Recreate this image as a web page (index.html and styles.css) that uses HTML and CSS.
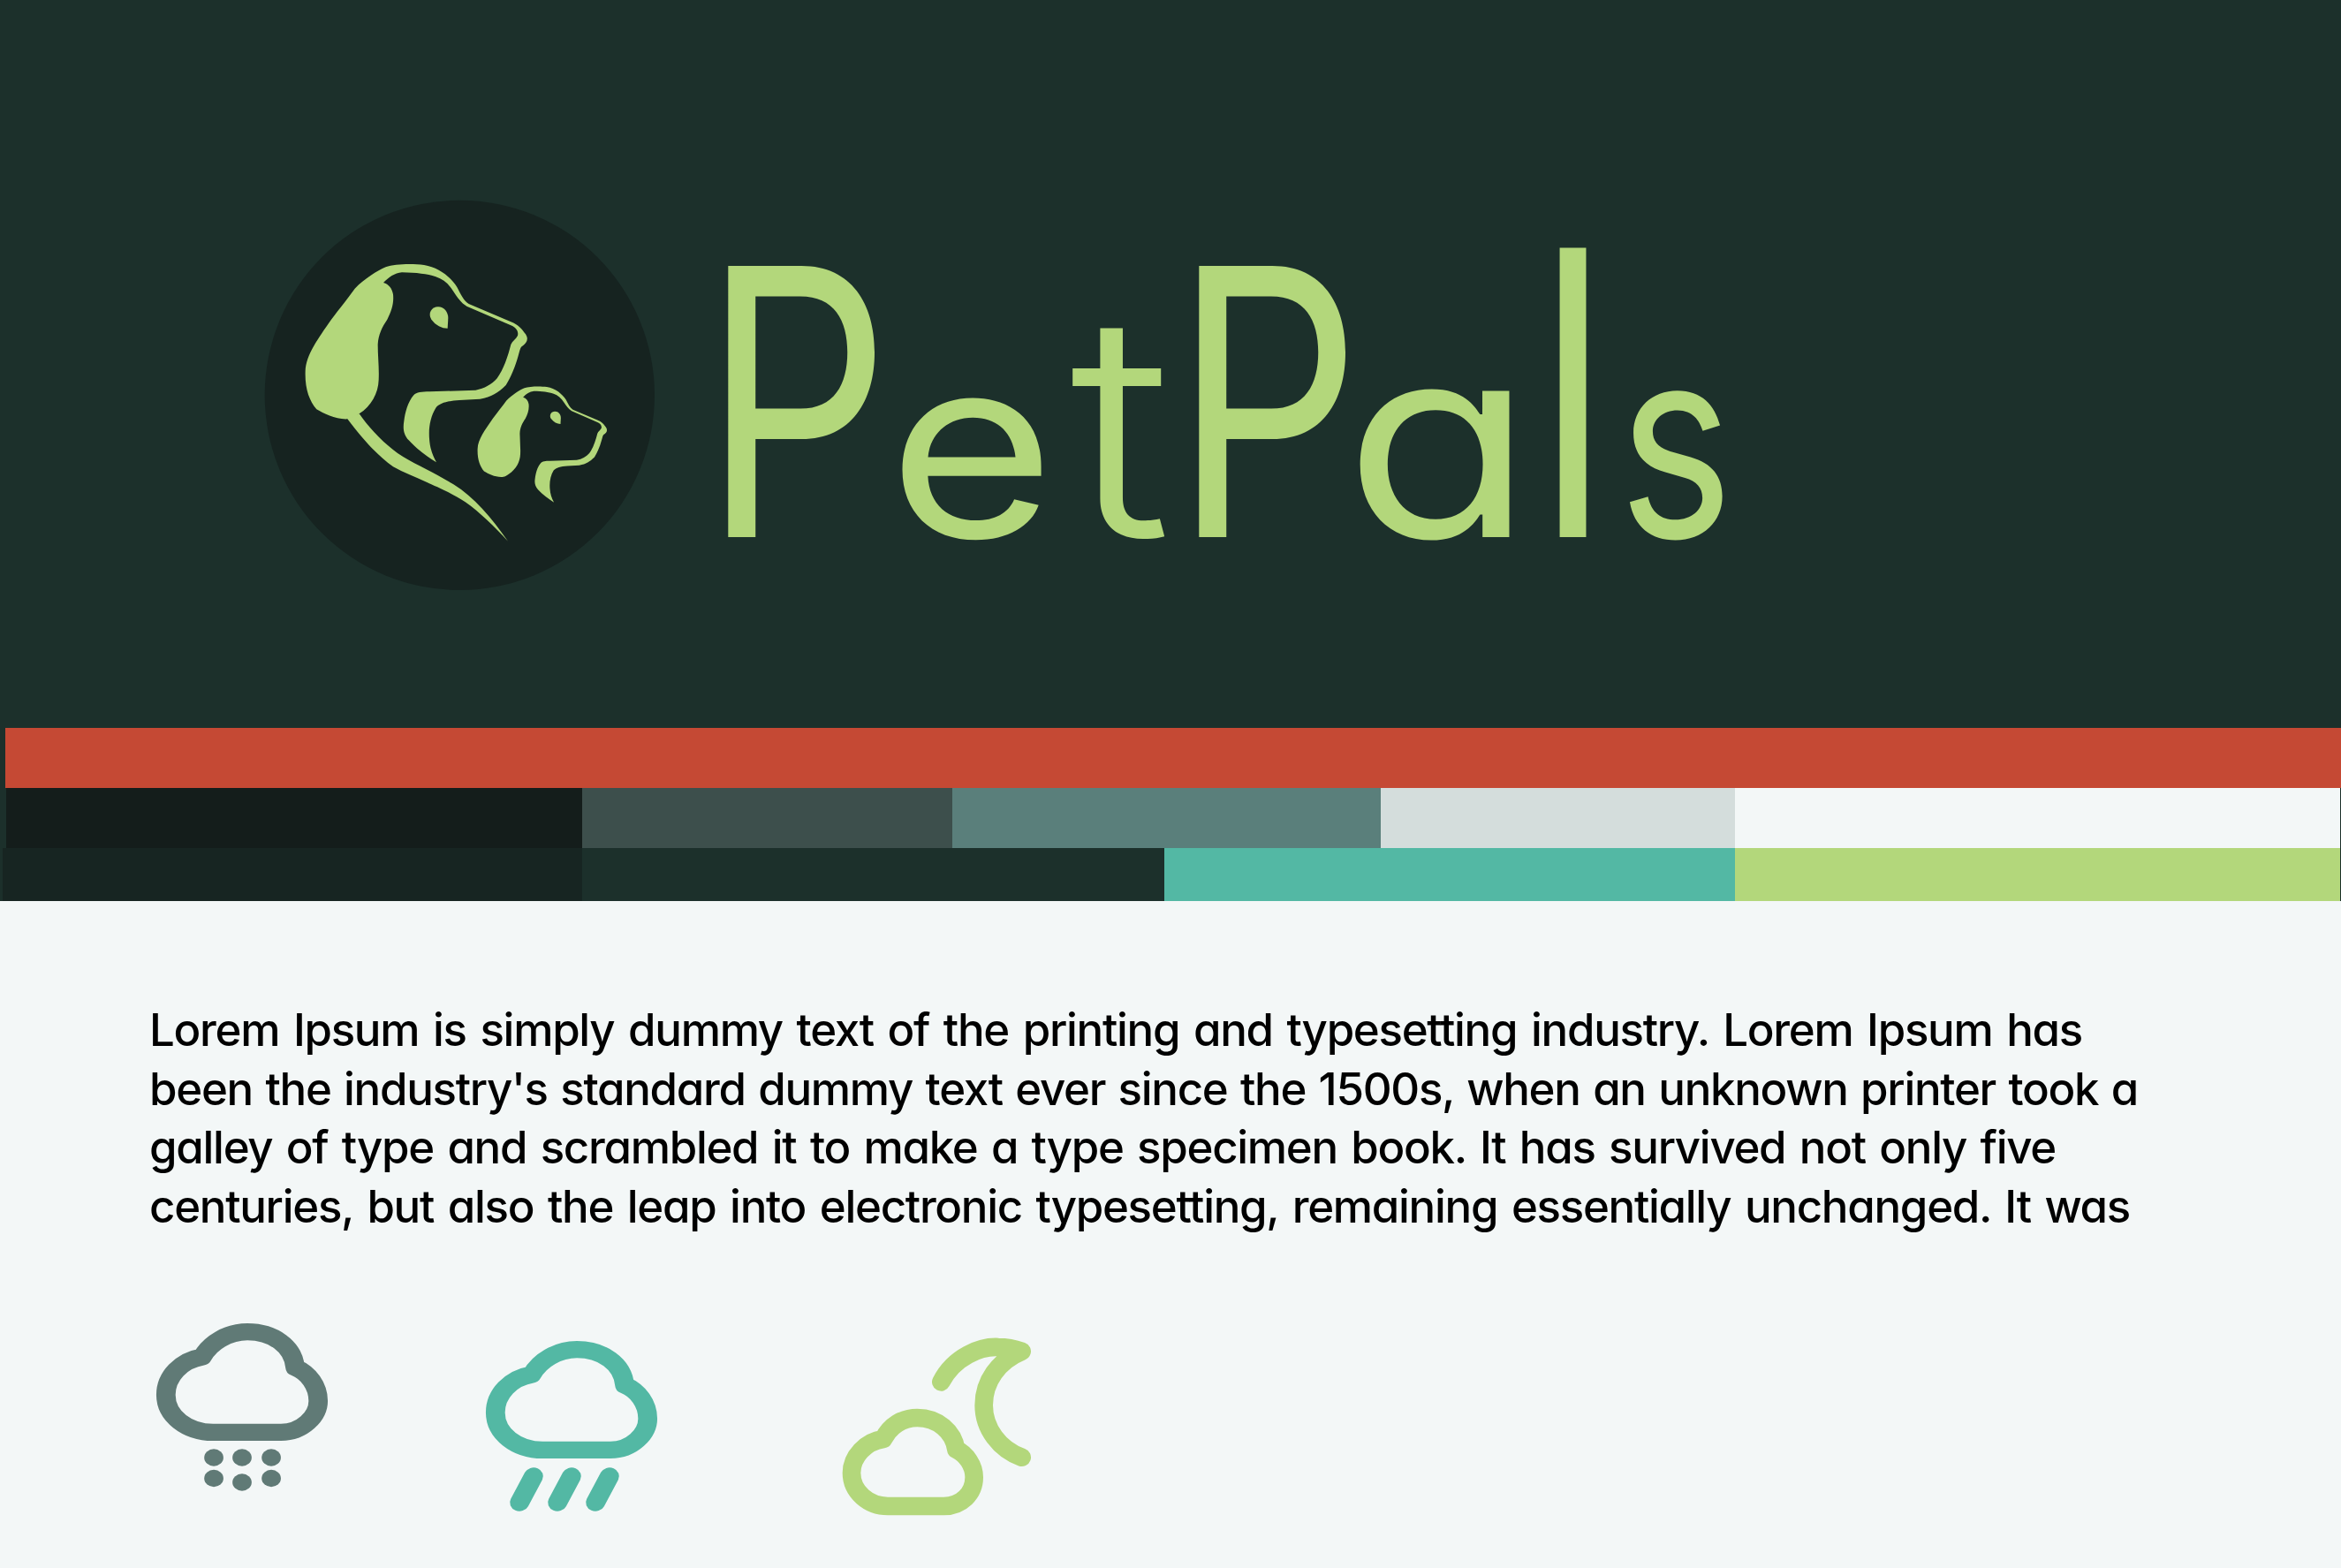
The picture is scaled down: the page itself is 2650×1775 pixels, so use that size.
FILE: index.html
```html
<!DOCTYPE html>
<html lang="en">
<head>
<meta charset="utf-8">
<title>PetPals</title>
<link rel="stylesheet" href="styles.css">
</head>
<body>
<div class="page">
  <header class="hero">
    <svg class="logo" viewBox="0 0 1440 1440" aria-label="PetPals logo">
      <defs>
        <g id="dog-head">
          <path d="M197 630C199 575 240 520 285 455C315 415 340 385 365 350C400 315 440 290 470 277C500 266 560 265 600 270C650 278 690 310 712 345C725 370 735 392 752 402L895 463C920 472 932 488 945 505C956 522 950 535 930 548C926 553 924 565 920 578C910 615 895 650 878 678C850 705 830 718 790 725L720 729C680 732 655 738 640 755C622 785 615 820 618 860C620 890 628 915 642 940C610 920 575 895 548 865C530 845 528 825 532 800C536 770 545 735 565 712C575 702 590 700 620 700L775 695C805 690 830 675 848 655C870 625 885 580 895 540C900 528 912 522 918 510C922 495 912 482 895 475L745 410C725 398 715 382 700 360C685 335 665 318 640 310C610 300 575 296 525 295C500 297 480 312 462 330C480 335 492 350 495 370C498 400 490 425 475 455C458 480 445 505 443 540C443 580 448 620 446 660C445 705 420 750 380 775C365 787 350 793 340 793C300 795 260 775 235 760C210 730 195 690 197 630Z"/>
          <path d="M648 412C668 412 682 430 682 450L680 485C660 485 640 475 625 455C612 435 625 412 648 412Z"/>
        </g>
      </defs>
      <circle class="logo-disc" cx="721" cy="712" r="662"/>
      <g class="logo-mark">
        <use href="#dog-head"/>
        <path d="M380 775C410 820 470 885 530 922C580 952 640 978 700 1015C770 1058 830 1130 885 1208C840 1160 790 1110 740 1075C690 1042 640 1022 610 1008C570 990 530 975 495 955C440 915 395 865 340 793Z"/>
        <use href="#dog-head" transform="translate(667 526) scale(.583 .585)"/>
      </g>
    </svg>
    <h1 class="brand">
      <span class="ch ch-p1">P</span><span class="ch ch-e">e</span><span class="ch ch-t">t</span><span class="ch ch-p2">P</span><span class="ch ch-a">a</span><span class="ch ch-l">l</span><span class="ch ch-s">s</span>
    </h1>
  </header>

  <section class="palette">
    <div class="row row-red"></div>
    <div class="row row-mid">
      <div class="sw sw-ink"></div>
      <div class="sw sw-slate"></div>
      <div class="sw sw-teal-grey"></div>
      <div class="sw sw-mist"></div>
      <div class="sw sw-snow"></div>
    </div>
    <div class="row row-low">
      <div class="sw sw-deep"></div>
      <div class="sw sw-forest"></div>
      <div class="sw sw-teal"></div>
      <div class="sw sw-lime"></div>
    </div>
  </section>

  <main class="content">
    <p class="copy">
      <span class="line line-1">Lorem Ipsum is simply dummy text of the printing and typesetting industry. Lorem Ipsum has</span>
      <span class="line line-2">been the industry's standard dummy text ever since the 1500s, when an unknown printer took a</span>
      <span class="line line-3">galley of type and scrambled it to make a type specimen book. It has survived not only five</span>
      <span class="line line-4">centuries, but also the leap into electronic typesetting, remaining essentially unchanged. It was</span>
    </p>
    <div class="icons">
      <svg class="icon icon-snow" viewBox="0 0 172.4 190" preserveAspectRatio="none" aria-label="Snow">
        <path class="cloud" d="M57 123.4H125.3C147 123.4 162.8 105 162.8 88C162.8 71 153 56 139.6 50C137.8 26 117.3 9.7 91.6 9.7C72 9.7 54.2 22 46.2 38C24.9 42 9.6 60 9.6 81C9.6 105 31 123.4 57 123.4Z"/>
        <g class="dots">
          <circle cx="57.8" cy="152" r="9.65"/><circle cx="86.2" cy="152" r="9.65"/><circle cx="115.6" cy="152" r="9.65"/>
          <circle cx="57.8" cy="175.5" r="9.65"/><circle cx="86.2" cy="180" r="9.65"/><circle cx="115.6" cy="175.5" r="9.65"/>
        </g>
      </svg>
      <svg class="icon icon-rain" viewBox="0 0 172.4 195" preserveAspectRatio="none" aria-label="Rain">
        <path class="cloud" d="M57 123.4H125.3C147 123.4 162.8 105 162.8 88C162.8 71 153 56 139.6 50C137.8 26 117.3 9.7 91.6 9.7C72 9.7 54.2 22 46.2 38C24.9 42 9.6 60 9.6 81C9.6 105 31 123.4 57 123.4Z"/>
        <path class="cloud" d="M48 153L33.8 183M86.2 153L72 183M124.4 153L110.2 183"/>
      </svg>
      <svg class="icon icon-moon" viewBox="0 0 810 720" aria-label="Cloudy night">
        <path class="cloud" d="M255 648H445C505 648 548 605 548 550C548 510 522 472 487 455C478 395 425 348 355 348C305 348 262 375 240 420C180 428 132 480 132 535C132 600 190 648 255 648Z"/>
        <path class="cloud" d="M436 226C480 140 570 105 630 108C660 108 690 115 710 122C630 155 581 225 581 305C581 385 635 455 710 482"/>
      </svg>
    </div>
  </main>
</div>
</body>
</html>
```

FILE: styles.css
```css
* { box-sizing: border-box; }
html, body { margin: 0; padding: 0; }
body { background: #f3f7f7; font-family: Inter, "Liberation Sans", sans-serif; font-feature-settings: "cv11" 1; }
.page { width: 2650px; height: 1775px; overflow: hidden; background: #f3f7f7; }

.hero { height: 824px; background: #1c302b; display: flex; align-items: flex-start; padding: 210px 0 0 280px; }
.logo { flex: none; width: 480px; height: 480px; }
.logo-disc { fill: #162320; }
.logo-mark { fill: #b3d77b; }

.brand { margin: 35px 0 0 35px; height: 400px; display: flex; align-items: baseline; color: #b3d77b; font-weight: 400; line-height: 400px; }
.ch { display: block; flex: none; letter-spacing: -.15em; transform-origin: 0 100%; }
.ch-p1, .ch-p2 { font-size: 422px; font-weight: 380; transform: scaleX(.79); }
.ch-p1 { width: 210px; }
.ch-e { width: 206px; font-size: 285px; transform: scaleX(1.14); }
.ch-t { width: 117px; font-size: 350px; font-weight: 350; transform: scaleX(1.1); }
.ch-p2 { width: 194px; }
.ch-a { width: 206px; font-size: 303px; transform: scaleX(1.15); }
.ch-l { width: 104px; font-size: 450px; font-weight: 300; }
.ch-s { width: 110px; font-size: 300px; transform: scaleX(.82); }

.palette { background: #1c302b; }
.row { display: flex; }
.row-red { height: 68px; margin-left: 6px; background: #c54934; }
.row-mid { height: 68px; padding: 0 1px 0 7px; }
.row-low { height: 60px; padding: 0 1px 0 3px; }
.sw-ink { width: 652px; background: #141d1b; }
.sw-slate { width: 419px; background: #3d4f4c; }
.sw-teal-grey { width: 485px; background: #5a7f7b; }
.sw-mist { width: 401px; background: #d4dddc; }
.sw-snow { flex: 1; background: #f3f7f7; }
.sw-deep { width: 656px; background: #172522; }
.sw-forest { width: 659px; background: #1c302b; }
.sw-teal { width: 646px; background: #53b8a4; }
.sw-lime { flex: 1; background: #b3d77b; }

.content { padding: 113px 0 0 169px; }
.copy { margin: 0; color: #000; font-size: 51px; line-height: 66.5px; letter-spacing: -1.3px; font-weight: 450; }
.line { display: block; white-space: nowrap; text-align-last: justify; }
.line-1 { width: 2188px; }
.line-2 { width: 2251px; }
.line-3 { width: 2158px; }
.line-4 { width: 2242px; }

.icons { display: flex; align-items: flex-start; margin: 99px 0 0 8px; }
.icon { flex: none; overflow: visible; }
.cloud { fill: none; stroke-width: 19.3; stroke-linecap: round; stroke-linejoin: round; }
.icon-snow { width: 194px; height: 190px; }
.icon-snow .cloud { stroke: #607a76; }
.dots { fill: #607a76; }
.icon-rain { width: 194px; height: 195px; margin: 20px 0 0 179px; }
.icon-rain .cloud { stroke: #53b8a4; }
.icon-moon { width: 270px; height: 240px; margin: -9px 0 0 176px; }
.icon-moon .cloud { stroke: #b3d77b; stroke-width: 62; }
```
